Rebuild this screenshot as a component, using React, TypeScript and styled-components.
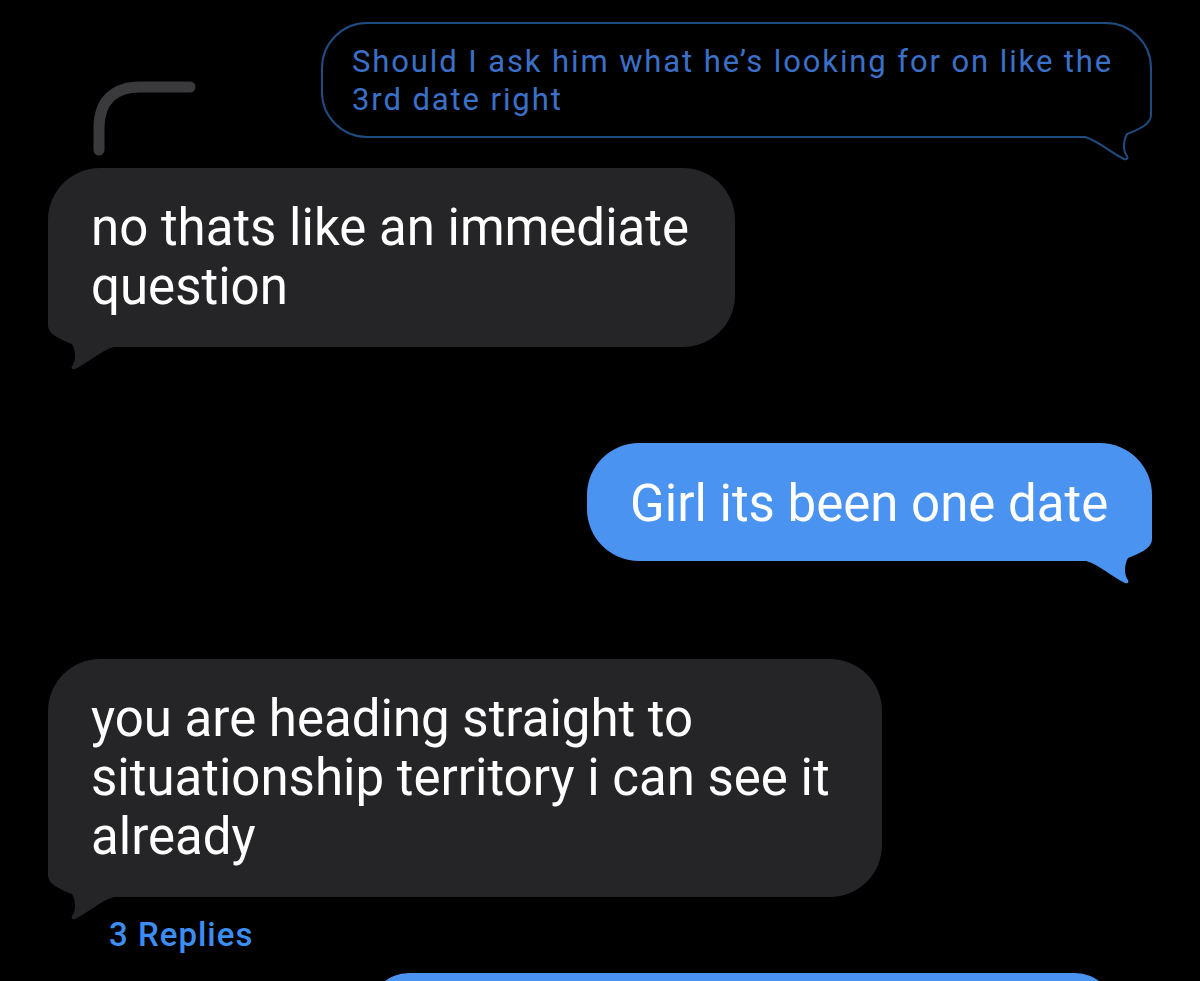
import styled, { createGlobalStyle } from "styled-components";

const GlobalStyle = createGlobalStyle`
    html, body {
        margin: 0;
        padding: 0;
        background: #000;
    }
    body {
        height: 981px;
        overflow: hidden;
        font-family: Roboto, "Liberation Sans", sans-serif;
    }
`;

const GREY = "#252527";
const BLUE = "#4b93f1";
const OUTLINE = "#1f4c80";

const STThread = styled.div`
    display: flex;
    flex-direction: column;
    padding: 22px 48px 0;
    background: #000;
`;

const STRow = styled.div<{ $side: "in" | "out"; $top: number; $right?: number }>`
    display: flex;
    justify-content: ${p => (p.$side === "out" ? "flex-end" : "flex-start")};
    margin-top: ${p => p.$top}px;
    margin-right: ${p => p.$right || 0}px;
`;

const STBubble = styled.div<{ $kind: "grey" | "blue" | "outline"; $width: number }>`
    position: relative;
    box-sizing: border-box;
    width: ${p => p.$width}px;
    border-radius: 52px;
    color: #fff;
    font-size: 51px;
    line-height: 59px;
    padding: 30px 43px 31px;
    background: ${p => (p.$kind === "grey" ? GREY : p.$kind === "blue" ? BLUE : "#000")};
    ${p =>
        p.$kind === "blue" &&
        `
        padding: 31px 43px 28px;
    `}
    ${p =>
        p.$kind === "outline" &&
        `
        border: 2px solid ${OUTLINE};
        border-radius: 46px;
        color: #3b70c8;
        font-size: 31px;
        letter-spacing: 1.9px;
        line-height: 38px;
        padding: 19px 29px 17px;
    `}
`;

// text sits above the tail svg, which also fills the bubble's corner
const STText = styled.span`
    position: relative;
`;

const STTail = styled.svg<{ $side: "in" | "out"; $outline?: boolean }>`
    position: absolute;
    width: 80px;
    height: 70px;
    bottom: ${p => (p.$outline ? -27 : -26)}px;
    ${p => (p.$side === "out" ? `right: ${p.$outline ? -1 : 0}px;` : "left: 0; transform: scaleX(-1);")}
    overflow: visible;
`;

const STReplyArc = styled.svg`
    position: absolute;
    left: 40px;
    top: -92px;
    width: 120px;
    height: 80px;
`;

const STReplies = styled.div`
    margin-top: 20px;
    padding-left: 61px;
    color: #3d8ef2;
    font-size: 33px;
    letter-spacing: 1px;
    line-height: 36px;
    font-weight: 500;
`;

const STStub = styled.div`
    width: 746px;
    height: 80px;
    border-radius: 52px;
    background: ${BLUE};
`;

const TAIL_EDGE =
    "M80 -14 L80 22 C80 32 66 37 56 41 C52 48 52 58 56 63 C57 65 56 67 53 66 C40 60 28 48 14 44 L-4 44";

const Tail = ({ side, color, outline }: { side: "in" | "out"; color: string; outline?: boolean }) => (
    <STTail $side={side} $outline={outline} viewBox="0 0 80 70">
        <path d={`${TAIL_EDGE} L-4 -14 Z`} fill={outline ? "#000" : color} />
        {outline && (
            <path d={TAIL_EDGE} fill="none" stroke={color} strokeWidth={2} strokeLinejoin="round" />
        )}
    </STTail>
);

const App = (): JSX.Element => {
    return (
        <>
            <GlobalStyle />
            <STThread>
                <STRow $side="out" $top={0}>
                    <STBubble $kind="outline" $width={831}>
                        <Tail side="out" color={OUTLINE} outline />
                        <STText>
                            Should I ask him what he’s looking for on like the
                            <br />
                            3rd date right
                        </STText>
                    </STBubble>
                </STRow>

                <STRow $side="in" $top={30}>
                    <STBubble $kind="grey" $width={687}>
                        <STReplyArc viewBox="0 0 120 80">
                            <path
                                d="M11 74 L11 52 C11 24 27 11 52 11 L102 11"
                                fill="none"
                                stroke="#3a3a3c"
                                strokeWidth={11}
                                strokeLinecap="round"
                            />
                        </STReplyArc>
                        <Tail side="in" color={GREY} />
                        <STText>
                            no thats like an immediate
                            <br />
                            question
                        </STText>
                    </STBubble>
                </STRow>

                <STRow $side="out" $top={96}>
                    <STBubble $kind="blue" $width={565}>
                        <Tail side="out" color={BLUE} />
                        <STText>Girl its been one date</STText>
                    </STBubble>
                </STRow>

                <STRow $side="in" $top={98}>
                    <STBubble $kind="grey" $width={834}>
                        <Tail side="in" color={GREY} />
                        <STText>
                            you are heading straight to
                            <br />
                            situationship territory i can see it
                            <br />
                            already
                        </STText>
                    </STBubble>
                </STRow>

                <STReplies>3 Replies</STReplies>

                <STRow $side="out" $top={20} $right={37}>
                    <STStub />
                </STRow>
            </STThread>
        </>
    );
};

export default App;
